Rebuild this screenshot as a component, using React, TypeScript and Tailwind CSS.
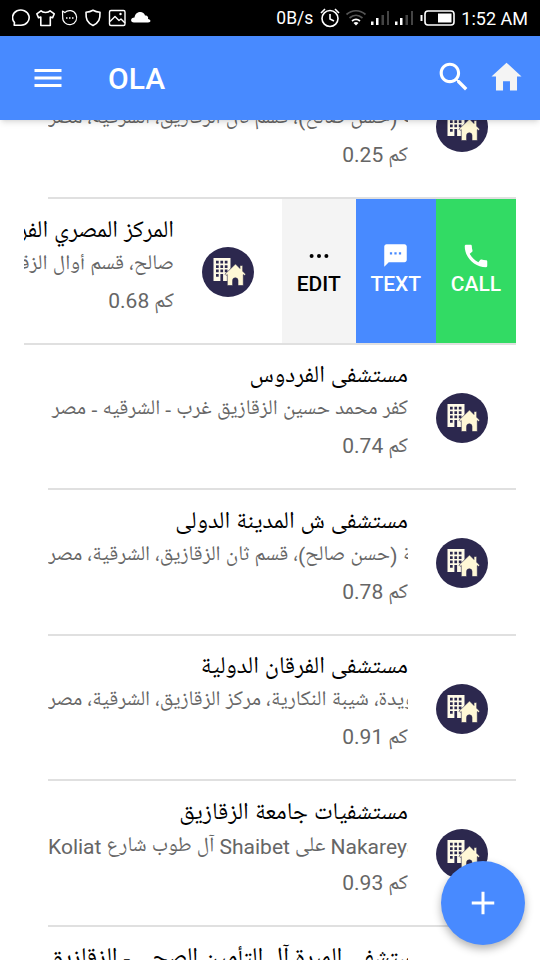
import type { ReactNode } from "react";
import { IoMdAdd, IoMdHome, IoMdMenu, IoMdSearch } from "react-icons/io";
import { MdCall, MdTextsms } from "react-icons/md";

type Place = {
  name: string;
  address: string;
  distance: string;
};

const places: Place[] = [
  {
    name: "مستشفى الزقازيق",
    address: "مدينة (حسن صالح)، قسم ثان الزقازيق، الشرقية، مصر",
    distance: "0.25",
  },
  {
    name: "المركز المصري الفرنسي",
    address: "صالح، قسم أوال الزقازيق، الشرقية، مصر",
    distance: "0.68",
  },
  {
    name: "مستشفى الفردوس",
    address: "كفر محمد حسين الزقازيق غرب - الشرقيه - مصر",
    distance: "0.74",
  },
  {
    name: "مستشفى ش المدينة الدولى",
    address: "مدينة (حسن صالح)، قسم ثان الزقازيق، الشرقية، مصر",
    distance: "0.78",
  },
  {
    name: "مستشفى الفرقان الدولية",
    address: "هويدة، شيبة النكارية، مركز الزقازيق، الشرقية، مصر",
    distance: "0.91",
  },
  {
    name: "مستشفيات جامعة الزقازيق",
    address: "Koliat آل طوب شارع Shaibet على Nakareya",
    distance: "0.93",
  },
  {
    name: "مستشفى المبرة آل التأمين الصحي - الزقازيق",
    address: "الزقازيق، الشرقية، مصر",
    distance: "0.95",
  },
];

function StatusBar() {
  return (
    <div className="flex h-9 shrink-0 items-center justify-between bg-black px-3 text-white">
      <svg width="142" height="20" viewBox="0 0 142 20" fill="none" stroke="currentColor" strokeWidth="1.6" strokeLinejoin="round">
        <path d="M2.500 14.500A8.300 7.600 0 1 1 9 17.200H2.200z" />
        <path d="M29 2.800l-4.200 3 1.700 4 2.300-.8v8.500h9.500V9l2.300.8 1.700-4-4.200-3c-1.800 2.300-7.300 2.300-9.100 0z" />
        <path d="M52.800 4.600A7 7 0 1 1 50.700 9L50.500 3z" strokeWidth="1.200" />
        <path d="M54 10h1.500M57 10h1.500M60 10h1.500" strokeWidth="1.500" />
        <path d="M81 2.200c2.500 1.400 4.500 1.800 7 2 .2 7-1 10.500-7 13.200-6-2.700-7.200-6.200-7-13.200 2.500-.2 4.500-.6 7-2z" />
        <rect x="97.500" y="2.500" width="15.500" height="15" rx="1.500" strokeWidth="1.400" />
        <path d="M98 13.500l5-5 4 4 2-1.500 4 4" strokeWidth="1.400" />
        <circle cx="108.500" cy="6" r="1.200" fill="currentColor" stroke="none" />
        <path d="M122 14.500c-4 0-3.800-5 .5-5 1-7 9.500-7 10.500-2 3 0 3.500 2 3 3.500 3 .3 3.500 3.500 0 3.500z" fill="currentColor" stroke="none" />
      </svg>
      <div className="flex items-center">
        <span className="w-[43px] text-[17.5px]">0B/s</span>
        <svg width="142" height="22" viewBox="0 0 142 22" fill="none" stroke="currentColor" strokeWidth="1.600">
          <circle cx="11" cy="11.500" r="8" />
          <path d="M11 7v5l4 2M2 6l4-4M20 6l-4-4" />
          <g strokeWidth="1.700">
            <path d="M27.500 7.500c5.500-5 13.500-5 19 0M30.500 11c4-3.500 9-3.500 13 0" stroke="#555" />
            <path d="M33 14c2.500-2 5.500-2 8 0" />
          </g>
          <path d="M34.500 16c1.500-1.500 3.500-1.500 5 0L37 18.500z" fill="currentColor" stroke="none" />
          <g fill="currentColor" stroke="none">
            <path d="M52 14.500h2.500V18H52zM57 11h2.500v7H57zM76 14.500h2.500V18H76zM81 11h2.500v7H81z" />
            <path d="M62.500 8H65v10h-2.500zM68 4h2v14h-2zM86.500 8H89v10h-2.500zM92 4h2v14h-2z" fill="#444" />
          </g>
          <path d="M102.500 8v6" strokeWidth="2" />
          <rect x="106" y="4" width="29" height="14" rx="3" />
          <rect x="119" y="6.500" width="13.500" height="9" fill="currentColor" stroke="none" />
        </svg>
        <span className="text-[18px]">1:52 AM</span>
      </div>
    </div>
  );
}

function Header() {
  return (
    <header className="z-10 flex h-[84px] shrink-0 items-center bg-[#488aff] pl-[30px] pr-[15px] text-white shadow-md">
      <IoMdMenu size={36} />
      <h1 className="ml-[42px] flex-1 text-[30px] font-medium">OLA</h1>
      <IoMdSearch size={37} className="mb-1" />
      <IoMdHome size={37} className="mb-1 ml-4 text-[#f4f4f4]" />
    </header>
  );
}

function PlaceIcon() {
  return (
    <svg width="52" height="50" viewBox="0 0 52 50" className="shrink-0">
      <ellipse cx="26" cy="25" rx="26" ry="25" fill="#2c284e" />
      <path d="M11.500 11h17v23h-17z" fill="#fffbe8" />
      <g fill="#2c284e">
        <path d="M14 13.800h2.700v2.700H14zM18.400 13.800h2.700v2.700h-2.700zM22.800 13.800h2.700v2.700h-2.700z" />
        <path d="M14 18.200h2.700v2.700H14zM18.400 18.200h2.700v2.700h-2.700zM22.800 18.200h2.700v2.700h-2.700z" />
        <path d="M14 22.600h2.700v2.700H14zM18.400 22.600h2.700v2.700h-2.700zM22.800 22.600h2.700v2.700h-2.700z" />
        <path d="M14 27h2.700v2.700H14zM18.400 27h2.700v7h-2.700z" />
      </g>
      <path
        d="M33.500 17l4.500 4.500V18.500h2.700v5.700l3 3-1.200 1.200-1.200-.8V38.500H36v-5a2.700 2.700 0 0 0-5.400 0v5h-5.300V27.600l-1.200.8-1.200-1.200z"
        fill="#fff8d6"
        stroke="#2c284e"
        strokeWidth="0.600"
      />
    </svg>
  );
}

function PlaceContent({ place }: { place: Place }) {
  return (
    <div className="flex h-full w-[492px] shrink-0 items-center pl-6 pr-7">
      <div className="h-full w-[360px] overflow-hidden whitespace-nowrap pt-[14.5px] text-right">
        <h2 className="h-9 text-[24px] leading-9 text-black">{place.name}</h2>
        <p className="h-[30px] text-[21px] leading-[30px] text-[#666]">{place.address}</p>
        <p className="mt-[3px] flex h-9 justify-end gap-[5px] text-[21px] leading-9 text-[#666]">
          <span>{place.distance}</span>
          <span className="pt-[2px]">كم</span>
        </p>
      </div>
      <div className="ml-7 pt-[3px]">
        <PlaceIcon />
      </div>
    </div>
  );
}

function ActionButton({
  label,
  className,
  children,
}: {
  label: string;
  className: string;
  children: ReactNode;
}) {
  return (
    <button className={`flex h-full flex-col items-center justify-center pb-1 text-[21px] font-medium ${className}`}>
      <span className="flex h-[30px] items-center">{children}</span>
      <span className="leading-[26px]">{label}</span>
    </button>
  );
}

function SwipedRow({ place }: { place: Place }) {
  return (
    <li className="flex h-[145.5px] justify-end overflow-hidden border-b-2 border-[#e0e0e0]">
      <PlaceContent place={place} />
      <div className="flex h-full w-[234px] shrink-0">
        <ActionButton label="EDIT" className="w-[73.5px] bg-[#f4f4f4] text-black">
          <svg width="20" height="6" viewBox="0 0 20 6" fill="currentColor">
            <circle cx="2.600" cy="3" r="2" />
            <circle cx="10" cy="3" r="2" />
            <circle cx="17.400" cy="3" r="2" />
          </svg>
        </ActionButton>
        <ActionButton label="TEXT" className="w-[80.5px] bg-[#488aff] text-white">
          <MdTextsms size={27} />
        </ActionButton>
        <ActionButton label="CALL" className="w-20 bg-[#32db64] text-white">
          <MdCall size={30} />
        </ActionButton>
      </div>
    </li>
  );
}

function PlaceRow({ place }: { place: Place }) {
  return (
    <li className="ml-6 h-[145.5px] border-b-2 border-[#e0e0e0]">
      <div className="-ml-6 h-full">
        <PlaceContent place={place} />
      </div>
    </li>
  );
}

export default function App() {
  return (
    <div className="relative flex h-[960px] w-[540px] flex-col overflow-hidden bg-white font-[Roboto,'Noto_Naskh_Arabic_UI','Noto_Naskh_Arabic',serif]">
      <StatusBar />
      <Header />
      <main className="min-h-0 flex-1 overflow-hidden px-6">
        <ul className="-mt-[66.5px]">
          {places.map((place) =>
            place.distance === "0.68" ? (
              <SwipedRow key={place.distance} place={place} />
            ) : (
              <PlaceRow key={place.distance} place={place} />
            )
          )}
        </ul>
      </main>
      <button className="absolute bottom-[15px] right-[15px] flex size-[84px] items-center justify-center rounded-full bg-[#488aff] text-white shadow-[0_4px_8px_rgba(0,0,0,0.3)]">
        <IoMdAdd size={36} />
      </button>
    </div>
  );
}
